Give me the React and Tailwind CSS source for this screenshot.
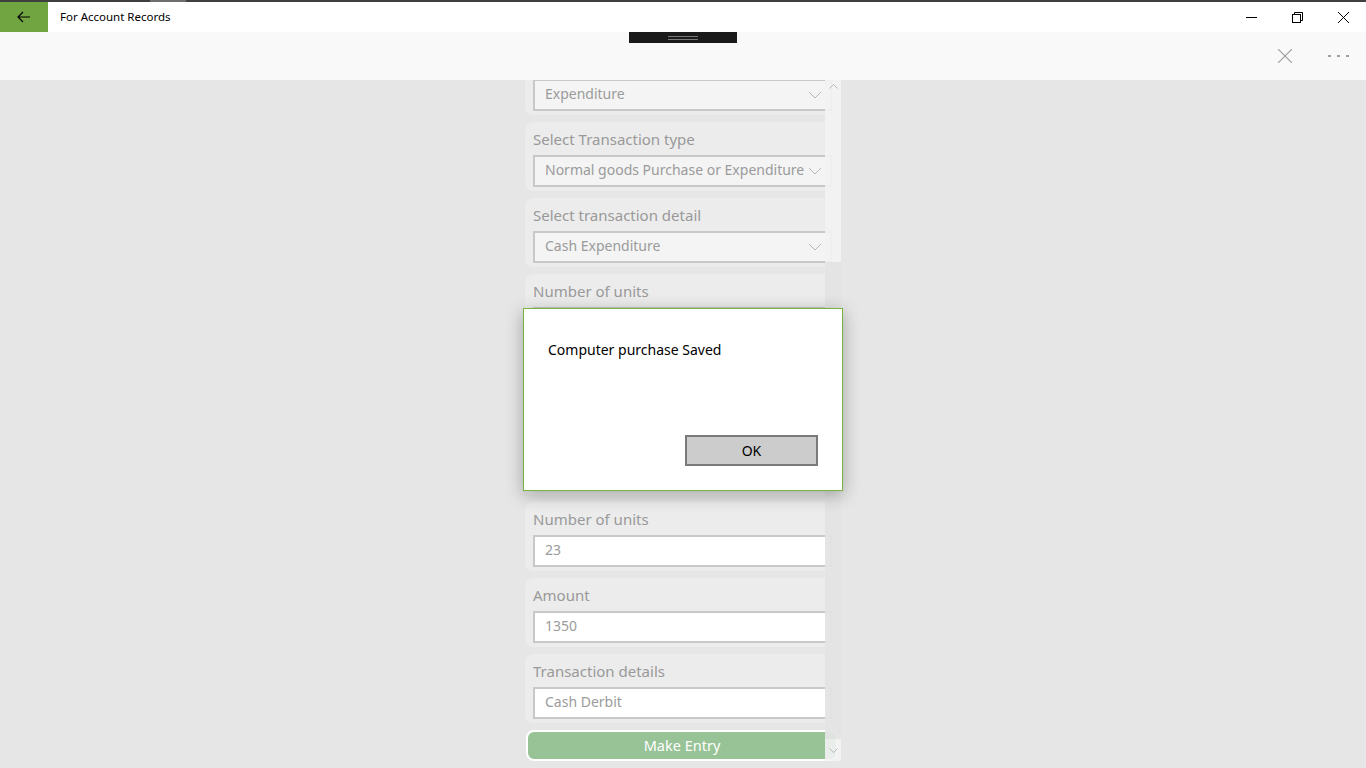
import React from "react";

const font = { fontFamily: '"Segoe UI", "Noto Sans", "Open Sans", sans-serif' };

function Chevron() {
  return (
    <svg width="14" height="8" viewBox="0 0 14 8" className="shrink-0">
      <path d="M1 1 L7 7 L13 1" fill="none" stroke="#b8b8b8" strokeWidth="1" />
    </svg>
  );
}

function SelectBox({ value }) {
  return (
    <div className="ml-[8px] h-[32px] w-[299px] flex items-center justify-between border-2 border-[#c8c8c8] bg-[#f4f4f4] pl-[10px] pr-[8px] gap-[4px]">
      <span className="text-[14px] leading-[18px] pb-[2px] text-[#9b9b9b] whitespace-nowrap overflow-hidden">{value}</span>
      <Chevron />
    </div>
  );
}

function InputBox({ value }) {
  return (
    <div className="ml-[8px] h-[32px] w-[299px] flex items-center border-2 border-[#c8c8c8] bg-white pl-[10px]">
      <span className="text-[14px] leading-[18px] pb-[2px] text-[#9b9b9b]">{value}</span>
    </div>
  );
}

function Card({ label, children }) {
  return (
    <div className="w-[310px] h-[69px] rounded-[8px] bg-[#ececec] flex flex-col pt-[4px]">
      <div className="h-[26px] pl-[8px] flex items-center text-[15px] text-[#999999] leading-none">{label}</div>
      <div className="mt-[3px]">{children}</div>
    </div>
  );
}

export default function App() {
  return (
    <div className="w-[1366px] h-[768px] flex flex-col bg-[#e6e6e6] overflow-hidden relative" style={font}>
      {/* top strip */}
      <div className="h-[2px] flex shrink-0">
        <div className="w-[150px] bg-[#3f3f3f]" />
        <div className="w-[36px] bg-[#6e6e6e]" />
        <div className="flex-1 bg-[#404040]" />
      </div>
      {/* title bar */}
      <div className="h-[30px] flex items-center bg-white shrink-0">
        <div className="w-[48px] h-full bg-[#70a542] flex items-center justify-center">
          <svg width="14" height="12" viewBox="0 0 14 12">
            <path d="M6 1 L1 6 L6 11 M1 6 H13" fill="none" stroke="#000" strokeWidth="1.2" />
          </svg>
        </div>
        <div className="ml-[12px] text-[11.5px] text-black pb-[1px]">For Account Records</div>
        <div className="ml-auto flex h-full">
          <div className="w-[46px] h-full flex items-center justify-center">
            <svg width="11" height="11" viewBox="0 0 11 11"><path d="M0 5.5 H11" stroke="#000" strokeWidth="1" /></svg>
          </div>
          <div className="w-[46px] h-full flex items-center justify-center">
            <svg width="11" height="11" viewBox="0 0 11 11">
              <rect x="0.5" y="2.5" width="8" height="8" fill="none" stroke="#000" strokeWidth="1" />
              <path d="M2.5 2.5 V0.5 H10.5 V8.5 H8.5" fill="none" stroke="#000" strokeWidth="1" />
            </svg>
          </div>
          <div className="w-[46px] h-full flex items-center justify-center">
            <svg width="11" height="11" viewBox="0 0 11 11"><path d="M0 0 L11 11 M11 0 L0 11" stroke="#000" strokeWidth="1" /></svg>
          </div>
        </div>
      </div>
      {/* command bar */}
      <div className="h-[48px] bg-[#f9f9f9] shrink-0 relative flex items-center">
        <div className="absolute left-[629px] top-0 w-[108px] h-[11px] bg-[#1a1a1a] flex flex-col items-center justify-center gap-[2px]">
          <div className="w-[30px] h-[1px] bg-[#777]" />
          <div className="w-[30px] h-[1px] bg-[#777]" />
        </div>
        <div className="ml-auto flex items-center">
          <div className="w-[58px] h-[48px] flex items-center justify-center">
            <svg width="14" height="14" viewBox="0 0 14 14"><path d="M0 0 L14 14 M14 0 L0 14" stroke="#9a9a9a" strokeWidth="1.1" /></svg>
          </div>
          <div className="w-[48px] h-[48px] flex items-center justify-center gap-[6px] mr-[4px]">
            <div className="w-[3px] h-[2px] bg-[#a0a0a0]" />
            <div className="w-[3px] h-[2px] bg-[#a0a0a0]" />
            <div className="w-[3px] h-[2px] bg-[#a0a0a0]" />
          </div>
        </div>
      </div>
      {/* main */}
      <div className="flex-1 relative overflow-hidden flex justify-center">
        <div className="w-[316px] relative h-full">
          <div className="flex flex-col gap-[7px] mt-[-34px] pl-0">
            <Card label=""><SelectBox value="Expenditure" /></Card>
            <Card label="Select Transaction type"><SelectBox value="Normal goods Purchase or Expenditure" /></Card>
            <Card label="Select transaction detail"><SelectBox value="Cash Expenditure" /></Card>
            <Card label="Number of units"><InputBox value="" /></Card>
            <Card label=""><InputBox value="" /></Card>
            <Card label=""><InputBox value="" /></Card>
            <Card label="Number of units"><InputBox value="23" /></Card>
            <Card label="Amount"><InputBox value="1350" /></Card>
            <Card label="Transaction details"><InputBox value="Cash Derbit" /></Card>
            <div className="ml-[1px] w-[312px] h-[31px] rounded-[8px] border-2 border-white bg-[#97c397] flex items-center justify-center text-[14.5px] text-white">
              Make Entry
            </div>
          </div>
          {/* scrollbar overlay */}
          <div className="absolute right-0 top-0 w-[16px] h-[681px] flex flex-col">
            <div className="h-[182px] bg-[#f3f3f3]/90 flex justify-center pt-[4px]">
              <svg width="9" height="5" viewBox="0 0 9 5"><path d="M0.5 4.5 L4.5 0.5 L8.5 4.5" fill="none" stroke="#aaa" strokeWidth="0.8" /></svg>
            </div>
            <div className="flex-1 bg-[#e4e4e4]/95" />
            <div className="h-[22px] bg-[#f3f3f3]/90 flex justify-center items-center">
              <svg width="9" height="5" viewBox="0 0 9 5"><path d="M0.5 0.5 L4.5 4.5 L8.5 0.5" fill="none" stroke="#aaa" strokeWidth="0.8" /></svg>
            </div>
          </div>
        </div>
        {/* dialog */}
        <div className="absolute left-[523px] top-[228px] w-[320px] h-[183px] bg-white border border-[#78b340] shadow-[0_4px_16px_rgba(0,0,0,0.3)] flex flex-col">
          <div className="mt-[30px] ml-[24px] text-[14px] text-black">Computer purchase Saved</div>
          <div className="mt-auto mb-[24px] mr-[24px] self-end w-[133px] h-[31px] bg-[#cccccc] border-2 border-[#7a7a7a] flex items-center justify-center text-[14px] text-black">
            OK
          </div>
        </div>
      </div>
    </div>
  );
}
